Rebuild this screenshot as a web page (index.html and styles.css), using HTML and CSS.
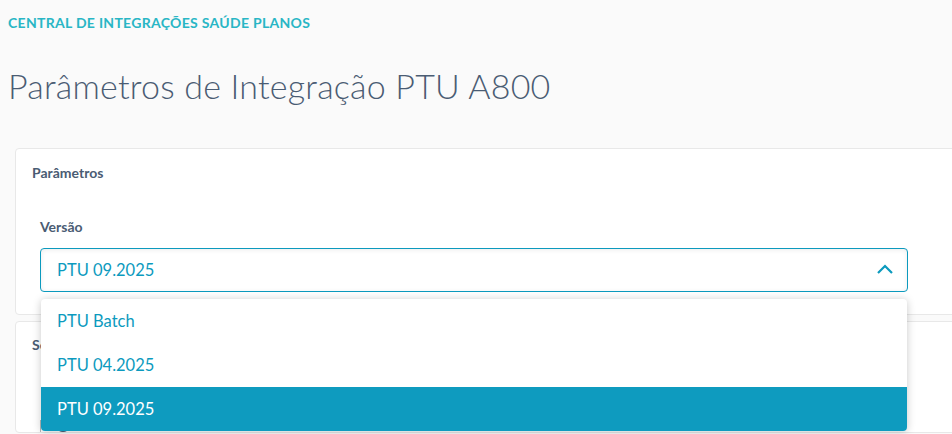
FILE: index.html
```html
<!DOCTYPE html>
<html lang="pt-BR">
<head>
<meta charset="utf-8">
<title>Parâmetros de Integração PTU A800</title>
<link rel="stylesheet" href="styles.css">
</head>
<body>
<header class="page-header">
  <div class="breadcrumb">CENTRAL DE INTEGRAÇÕES SAÚDE PLANOS</div>
  <h1 class="title">Parâmetros de Integração PTU A800</h1>
</header>
<main class="content">
  <section class="card card-params">
    <h2 class="card-title">Parâmetros</h2>
    <div class="field">
      <label class="field-label">Versão</label>
      <div class="select-wrap">
        <div class="select">
          <span class="select-value">PTU 09.2025</span>
          <svg class="chevron" width="18" height="10" viewBox="0 0 18 10"><path d="M2 9 L9 2 L16 9" fill="none" stroke="#0c9abe" stroke-width="2.2"/></svg>
        </div>
        <ul class="dropdown">
          <li class="option">PTU Batch</li>
          <li class="option">PTU 04.2025</li>
          <li class="option selected">PTU 09.2025</li>
        </ul>
      </div>
    </div>
  </section>
  <section class="card card-second">
    <h2 class="card-title">Serviços</h2>
    <div class="second-body">
      <div class="second-box">
        <span class="circle-icon"></span>
      </div>
    </div>
  </section>
</main>
</body>
</html>
```
FILE: styles.css
```css
* { box-sizing: border-box; }
html, body { margin: 0; padding: 0; }
body {
  background: #fafafa;
  font-family: Lato, "Open Sans", sans-serif;
  color: #4a5c73;
  width: 952px;
  height: 434px;
  overflow: hidden;
}
.page-header {
  padding: 14px 8px 0 8px;
}
.breadcrumb {
  font-size: 14px;
  font-weight: 700;
  color: #29b6c5;
  line-height: 18px;
  letter-spacing: 0.3px;
}
.title {
  margin: 32px 0 0 0;
  font-size: 34px;
  font-weight: 300;
  line-height: 44px;
  color: #4a5c73;
  letter-spacing: 0.2px;
}
.content {
  padding: 40px 0 0 15px;
  display: flex;
  flex-direction: column;
  gap: 6px;
}
.card {
  background: #fff;
  border: 1px solid #e8e8e8;
  border-radius: 4px;
  width: 960px;
}
.card-title {
  margin: 0;
  font-size: 14px;
  font-weight: 700;
  line-height: 20px;
  color: #4a5c73;
}
.card-params {
  padding: 14px 16px 24px 16px;
  height: 167px;
}
.field {
  padding: 34px 0 0 8px;
}
.field-label {
  display: block;
  font-size: 14px;
  font-weight: 700;
  line-height: 20px;
  color: #4a5c73;
  margin-bottom: 11px;
}
.select-wrap {
  position: relative;
  width: 868px;
}
.select {
  height: 44px;
  border: 1px solid #0c9abe;
  border-radius: 4px;
  background: #fff;
  box-shadow: inset 0 1px 5px rgba(0,0,0,0.08);
  display: flex;
  align-items: center;
  justify-content: space-between;
  padding: 0 13px 0 16px;
}
.select-value {
  font-size: 16.5px;
  color: #0c9abe;
}
.chevron { display: block; margin-top: -2px; }
.dropdown {
  position: absolute;
  top: 51px;
  left: 1px;
  right: 1px;
  margin: 0;
  padding: 0;
  list-style: none;
  background: #fff;
  border-radius: 4px;
  overflow: hidden;
  box-shadow: 0 1px 8px rgba(0,0,0,0.22);
  z-index: 5;
}
.option {
  height: 44px;
  display: flex;
  align-items: center;
  padding-left: 16px;
  font-size: 16.5px;
  color: #0c9abe;
}
.option.selected {
  background: #0e9bbf;
  color: #fff;
}
.card-second {
  padding: 13px 16px 0 16px;
  height: 112px;
  overflow: hidden;
}
.second-body {
  padding: 65px 0 0 8px;
}
.second-box {
  border-left: 1px solid #b8b8b8;
  height: 40px;
  padding: 11px 0 0 14px;
}
.circle-icon {
  display: block;
  width: 16px;
  height: 16px;
  border: 2px solid #4a5c73;
  border-radius: 50%;
}
```
